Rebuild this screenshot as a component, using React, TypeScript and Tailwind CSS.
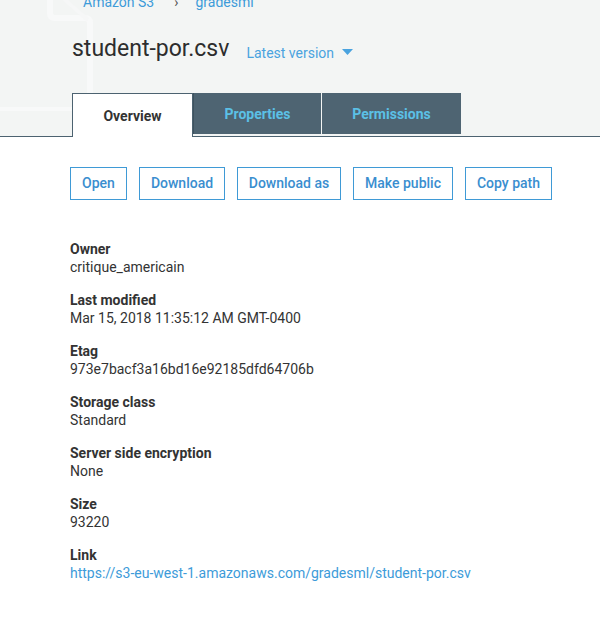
import React from "react";

const props: { label: string; value: string; link?: boolean }[] = [
  { label: "Owner", value: "critique_americain" },
  { label: "Last modified", value: "Mar 15, 2018 11:35:12 AM GMT-0400" },
  { label: "Etag", value: "973e7bacf3a16bd16e92185dfd64706b" },
  { label: "Storage class", value: "Standard" },
  { label: "Server side encryption", value: "None" },
  { label: "Size", value: "93220" },
  { label: "Link", value: "https://s3-eu-west-1.amazonaws.com/gradesml/student-por.csv", link: true },
];

const buttons: { label: string; w: string }[] = [
  { label: "Open", w: "w-[57px]" },
  { label: "Download", w: "w-[86px]" },
  { label: "Download as", w: "w-[104px]" },
  { label: "Make public", w: "w-[100px]" },
  { label: "Copy path", w: "w-[87px]" },
];

export default function App() {
  return (
    <div className="relative w-[600px] h-[624px] overflow-hidden bg-white font-['Roboto','Liberation_Sans',sans-serif] text-[14px] text-[#333]">
      <div className="relative bg-[#f3f5f4] border-b border-[#4c6270] pl-[72px]">
        <svg className="absolute left-0 top-0" width="120" height="136" viewBox="0 0 120 136" fill="none">
          <path d="M50 -5 V21 Q50 26 55 26 H85 Q90 26 90 31 V136" stroke="#f8f9f9" strokeWidth="6" />
          <path d="M56 0 L88 28" stroke="#f6f7f7" strokeWidth="4" />
          <path d="M0 117 H72" stroke="#f8f9f9" strokeWidth="4" />
        </svg>
        <div className="relative mt-[-8px] flex items-center h-[20px] leading-[20px] pl-[11px] text-[#3d9bd9]">
          <span>Amazon S3</span>
          <span className="ml-[20px] text-[#555]">›</span>
          <span className="ml-[17px]">gradesml</span>
        </div>
        <div className="relative mt-[23px] flex items-baseline h-[28px]">
          <span className="text-[23px] leading-[28px] text-[#2d2d2d]">student-por.csv</span>
          <span className="ml-[17px] text-[14px] leading-[20px] text-[#4aa3df] relative top-[2px]">Latest version</span>
          <svg className="ml-[8px] relative top-[-1px]" width="11" height="6" viewBox="0 0 11 6">
            <path d="M0 0 H11 L5.5 6 Z" fill="#4aa3df" />
          </svg>
        </div>
        <div className="relative mt-[30px] flex items-start h-[43px]">
          <div className="w-[121px] h-[44px] bg-white border border-b-0 border-[#4c6270] flex items-center justify-center pt-px font-bold text-[#333]">
            Overview
          </div>
          <div className="w-[128px] h-[41px] bg-[#4e6472] border-l border-[#3e525f] flex items-center justify-center pt-px font-bold text-[#5bc0e6]">
            Properties
          </div>
          <div className="ml-px w-[139px] h-[41px] bg-[#4e6472] flex items-center justify-center pt-px font-bold text-[#5bc0e6]">
            Permissions
          </div>
        </div>
      </div>

      <div className="pl-[70px] mt-[30px] flex gap-[12px]">
        {buttons.map((b) => (
          <div
            key={b.label}
            className={`${b.w} h-[33px] border border-[#3f9ad6] flex items-center justify-center font-medium text-[#3a8ecf]`}
          >
            {b.label}
          </div>
        ))}
      </div>

      <div className="pl-[70px] mt-[40px] flex flex-col gap-[15px]">
        {props.map((p) => (
          <div key={p.label} className="flex flex-col leading-[18px]">
            <span className="font-bold text-[#333]">{p.label}</span>
            <span className={p.link ? "text-[#3d9bd9]" : "text-[#333]"}>{p.value}</span>
          </div>
        ))}
      </div>
    </div>
  );
}
